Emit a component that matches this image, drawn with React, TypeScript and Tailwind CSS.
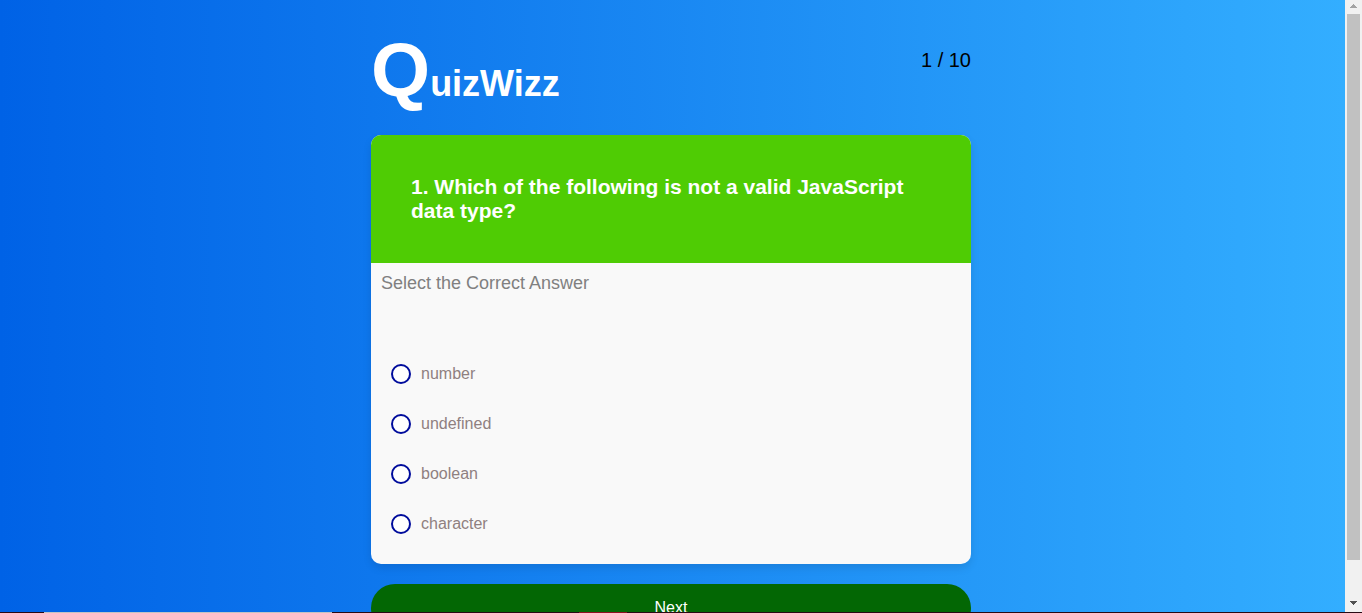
import { useState } from 'react';

const options = ['number', 'undefined', 'boolean', 'character'];

function Scrollbar() {
  return (
    <div aria-hidden="true" className="flex w-[17px] shrink-0 flex-col items-center bg-[#f1f1f1]">
      <svg width="17" height="14" viewBox="0 0 17 14" shapeRendering="crispEdges" fill="#a3a3a3">
        <path d="M8 4h1v1h1v1h1v1h1v1H5V7h1V6h1V5h1z" />
      </svg>
      <div className="flex w-[13px] flex-1 flex-col">
        <div className="grow-[94] basis-0 bg-[#c1c1c1]" />
        <div className="grow-[6] basis-0" />
      </div>
      <svg width="17" height="17" viewBox="0 0 17 17" shapeRendering="crispEdges" fill="#505050">
        <path d="M5 6h7v1h-1v1h-1v1H9v1H8V9H7V8H6V7H5z" />
      </svg>
    </div>
  );
}

export default function App() {
  const [answer, setAnswer] = useState('');

  return (
    <div className="flex h-screen flex-col font-['Liberation_Sans',Arial,sans-serif]">
      <div className="flex min-h-0 flex-1 overflow-hidden">
        <main className="min-w-0 flex-1 overflow-hidden bg-[linear-gradient(to_right,#0062e6,#33aeff)] pt-[26px] pr-[3px]">
          <div className="mx-auto max-w-[600px]">
            <header className="flex items-start justify-between">
              <h1 className="text-[36px] leading-[87px] font-bold text-white">
                <span className="text-[76px]">Q</span>uizWizz
              </h1>
              <p className="pt-[22px] text-[20px] leading-6 text-black">1 / 10</p>
            </header>

            <form onSubmit={(e) => e.preventDefault()}>
              <fieldset className="mt-2 overflow-hidden rounded-[10px] bg-[#f9f9f9] shadow-[0_4px_8px_rgba(0,0,0,0.1)]">
                <h2 className="bg-[#4fcc04] px-10 pt-10 pb-10 text-[21px] leading-6 font-bold text-white">
                  1. Which of the following is not a valid JavaScript data type?
                </h2>
                <p className="px-[10px] pt-[10px] text-[18px] leading-5 text-[#808080]">
                  Select the Correct Answer
                </p>
                <div className="flex flex-col gap-[30px] px-5 pt-[71px] pb-[30px]">
                  {options.map((option) => (
                    <label key={option} className="flex items-center gap-[10px] text-[16px] leading-5 text-[#8f8080]">
                      <input
                        type="radio"
                        name="answer"
                        value={option}
                        checked={answer === option}
                        onChange={() => setAnswer(option)}
                        className="size-5 appearance-none rounded-full border-2 border-[#000c9c] bg-white checked:bg-[#000c9c]"
                      />
                      {option}
                    </label>
                  ))}
                </div>
              </fieldset>
              <button
                type="submit"
                className="mt-5 h-12 w-full rounded-[25px] bg-[#036704] text-[16px] text-white"
              >
                Next
              </button>
            </form>
          </div>
        </main>
        <Scrollbar />
      </div>
      <div aria-hidden="true" className="flex h-px shrink-0 bg-[#2a0a14]">
        <div className="ml-11 w-72 bg-[#c3c3c3]" />
        <div className="ml-[247px] w-12 bg-[#8c1020]" />
      </div>
    </div>
  );
}
